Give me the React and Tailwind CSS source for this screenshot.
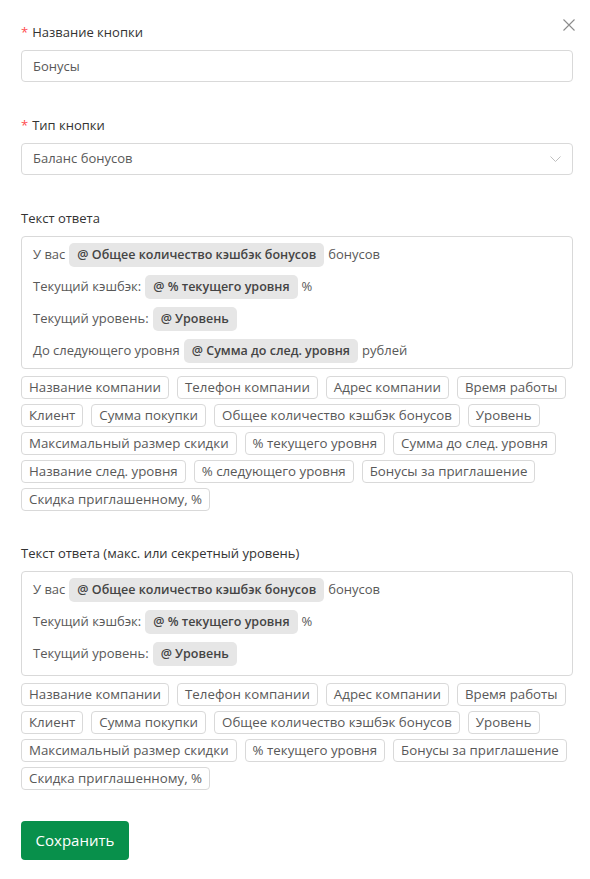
import React from "react";

const font = { fontFamily: '"Open Sans", "Noto Sans", sans-serif' };

const tags1 = [
  "Название компании",
  "Телефон компании",
  "Адрес компании",
  "Время работы",
  "Клиент",
  "Сумма покупки",
  "Общее количество кэшбэк бонусов",
  "Уровень",
  "Максимальный размер скидки",
  "% текущего уровня",
  "Сумма до след. уровня",
  "Название след. уровня",
  "% следующего уровня",
  "Бонусы за приглашение",
  "Скидка приглашенному, %",
];

const tags2 = [
  "Название компании",
  "Телефон компании",
  "Адрес компании",
  "Время работы",
  "Клиент",
  "Сумма покупки",
  "Общее количество кэшбэк бонусов",
  "Уровень",
  "Максимальный размер скидки",
  "% текущего уровня",
  "Бонусы за приглашение",
  "Скидка приглашенному, %",
];

function Label({ children, required }) {
  return (
    <div className="h-[22px] leading-[22px] text-[13px] text-[#333] mb-[7px] flex items-center">
      {required && <span className="text-[#ff4d4f] mr-[4px] text-[13px]">*</span>}
      <span>{children}</span>
    </div>
  );
}

function Chip({ children }) {
  return (
    <span className="inline-flex items-center h-[24px] px-[8px] mx-[4px] rounded-[5px] bg-[#e6e6e6] text-[#444] font-semibold text-[12.5px]">
      {children}
    </span>
  );
}

function Line({ children }) {
  return <div className="h-[32px] flex items-center text-[13px] text-[#595959]">{children}</div>;
}

function Tags({ items }) {
  return (
    <div className="mt-[7px] flex flex-wrap gap-x-[8px] gap-y-[5px]">
      {items.map((t, i) => (
        <span
          key={i}
          className="h-[23px] px-[7px] flex items-center border border-[#d9d9d9] rounded-[4px] bg-white text-[13.3px] text-[#595959]"
        >
          {t}
        </span>
      ))}
    </div>
  );
}

export default function App() {
  return (
    <div className="relative w-[590px] h-[879px] bg-white" style={font}>
      <button className="absolute left-[563px] top-[19px] w-[12px] h-[12px]">
        <svg viewBox="0 0 12 12" width="12" height="12" fill="none" stroke="#8c8c8c" strokeWidth="1.1">
          <path d="M0.5 0.5 L11.5 11.5 M11.5 0.5 L0.5 11.5" />
        </svg>
      </button>
      <div className="pl-[21px] pt-[21px] w-[573px]">
        <div className="mb-[32px]">
          <Label required>Название кнопки</Label>
          <div className="h-[32px] border border-[#d9d9d9] rounded-[4px] px-[11px] pt-[2px] flex items-center text-[13px] text-[#595959]">
            Бонусы
          </div>
        </div>
        <div className="mb-[32px]">
          <Label required>Тип кнопки</Label>
          <div className="h-[32px] border border-[#d9d9d9] rounded-[4px] px-[11px] flex items-center justify-between text-[13px] text-[#595959]">
            <span>Баланс бонусов</span>
            <svg width="11" height="6" viewBox="0 0 11 6" fill="none" stroke="#bfbfbf" strokeWidth="1">
              <path d="M0.5 0.5 L5.5 5.5 L10.5 0.5" />
            </svg>
          </div>
        </div>
        <div className="mb-[31px]">
          <Label>Текст ответа</Label>
          <div className="border border-[#d9d9d9] rounded-[4px] px-[11px] pt-[2px] pb-[1px]">
            <Line>
              У вас<Chip>@ Общее количество кэшбэк бонусов</Chip>бонусов
            </Line>
            <Line>
              Текущий кэшбэк:<Chip>@ % текущего уровня</Chip>%
            </Line>
            <Line>
              Текущий уровень:<Chip>@ Уровень</Chip>
            </Line>
            <Line>
              До следующего уровня<Chip>@ Сумма до след. уровня</Chip>рублей
            </Line>
          </div>
          <Tags items={tags1} />
        </div>
        <div className="mb-[31px]">
          <Label>Текст ответа (макс. или секретный уровень)</Label>
          <div className="border border-[#d9d9d9] rounded-[4px] px-[11px] pt-[2px] pb-[5px]">
            <Line>
              У вас<Chip>@ Общее количество кэшбэк бонусов</Chip>бонусов
            </Line>
            <Line>
              Текущий кэшбэк:<Chip>@ % текущего уровня</Chip>%
            </Line>
            <Line>
              Текущий уровень:<Chip>@ Уровень</Chip>
            </Line>
          </div>
          <Tags items={tags2} />
        </div>
        <button className="h-[39px] w-[108px] rounded-[4px] bg-[#08904b] text-white text-[15px] flex items-center justify-center">
          Сохранить
        </button>
      </div>
    </div>
  );
}
